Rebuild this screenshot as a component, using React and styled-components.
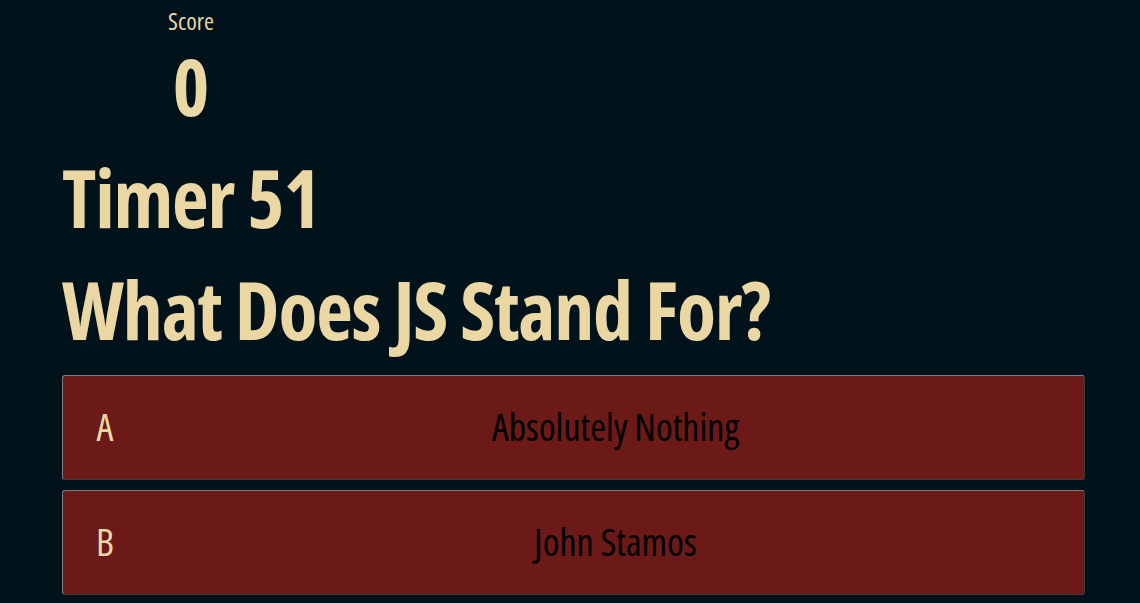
import React from "react";
import styled, { createGlobalStyle } from "styled-components";

const GlobalStyle = createGlobalStyle`
  html, body {
    margin: 0;
    padding: 0;
    background-color: #01121a;
  }
  body {
    font-family: "Open Sans", "Roboto Condensed", sans-serif;
    font-stretch: condensed;
    color: #ead7a4;
  }
`;

const Page = styled.div`
  min-height: 603px;
  padding: 9px 55px 0 62px;
  box-sizing: border-box;
  display: flex;
  flex-direction: column;
`;

const ScoreBox = styled.div`
  width: 258px;
  display: flex;
  flex-direction: column;
  align-items: center;
`;

const ScoreLabel = styled.div`
  font-size: 24px;
  line-height: 24px;
`;

const ScoreValue = styled.div`
  margin-top: 14px;
  font-size: 78px;
  line-height: 78px;
  font-weight: bold;
`;

const Heading = styled.h1`
  margin: 32px 0 0;
  font-size: 80px;
  line-height: 80px;
  font-weight: bold;
  letter-spacing: -1.2px;
  white-space: nowrap;
`;

const Answers = styled.div`
  margin-top: 26px;
  display: flex;
  flex-direction: column;
  gap: 10px;
`;

const AnswerButton = styled.button`
  display: flex;
  align-items: center;
  height: 105px;
  padding: 0 0 4px;
  background-color: #6b1a17;
  border: 1px solid;
  border-color: #7c7c7c #3c3c3c #3c3c3c #7c7c7c;
  border-radius: 3px;
  font-family: inherit;
  font-stretch: inherit;
  cursor: pointer;
`;

const Letter = styled.span`
  width: 84px;
  flex-shrink: 0;
  text-align: center;
  color: #ead7a4;
  font-size: 38px;
`;

const AnswerText = styled.span`
  flex: 1;
  text-align: center;
  color: #000;
  font-size: 38px;
`;

const answers = [
  { letter: "A", text: "Absolutely Nothing" },
  { letter: "B", text: "John Stamos" },
];

const App = () => {
  return (
    <>
      <GlobalStyle />
      <Page>
        <ScoreBox>
          <ScoreLabel>Score</ScoreLabel>
          <ScoreValue>0</ScoreValue>
        </ScoreBox>
        <Heading>Timer 51</Heading>
        <Heading>What Does JS Stand For?</Heading>
        <Answers>
          {answers.map((a) => (
            <AnswerButton key={a.letter}>
              <Letter>{a.letter}</Letter>
              <AnswerText>{a.text}</AnswerText>
            </AnswerButton>
          ))}
        </Answers>
      </Page>
    </>
  );
};

export default App;
